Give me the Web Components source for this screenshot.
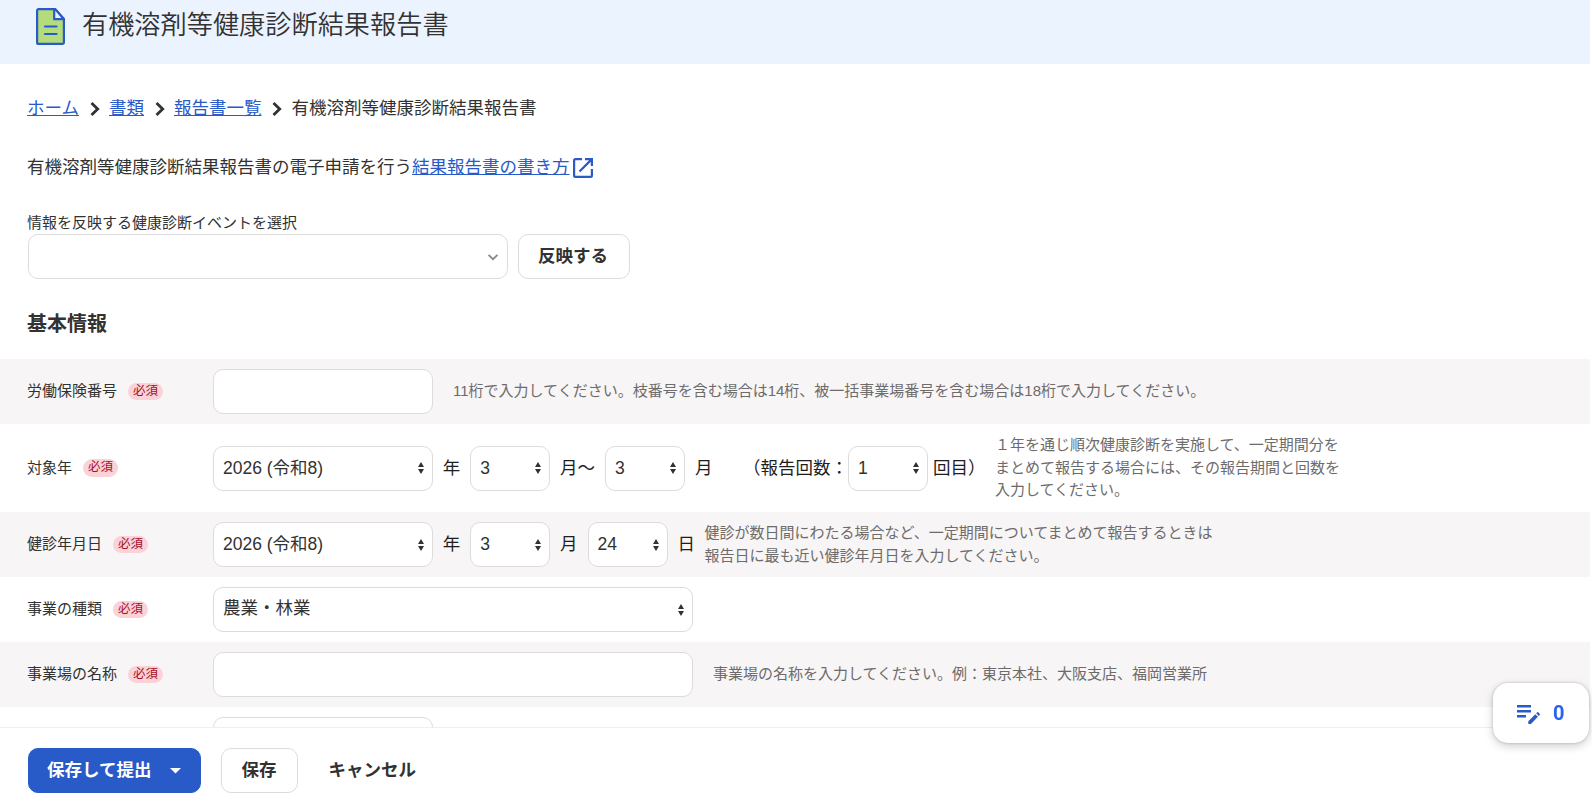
<!DOCTYPE html>
<html lang="ja">
<head>
<meta charset="UTF-8">
<title>有機溶剤等健康診断結果報告書</title>
<style>
    html, body {
        margin: 0;
        height: 100%;
        overflow: hidden;
        background: #fff;
    }
    body {
        font-family: "Liberation Sans", "Noto Sans CJK JP", sans-serif;
        font-size: 17.5px;
        line-height: 1.5;
        color: #323232;
    }
</style>
</head>
<body>
<report-page></report-page>

<script>
class PageHeader extends HTMLElement {
    constructor() {
        super();
        this.attachShadow({ mode: 'open' });
    }

    connectedCallback() {
        this.shadowRoot.innerHTML = `
            <style>
                :host {
                    display: flex;
                    align-items: flex-start;
                    height: 64px;
                    box-sizing: border-box;
                    padding: 8px 0 0 36px;
                    background: #ebf3ff;
                }
                svg {
                    display: block;
                    width: 29px;
                    height: 37px;
                    margin-right: 17px;
                }
                h1 {
                    margin: 0;
                    font-size: 26.2px;
                    line-height: 35px;
                    font-weight: 350;
                    white-space: nowrap;
                }
            </style>
            <svg viewBox="0 0 29 37" fill="none" stroke="#285ac8" stroke-width="2.200" stroke-linejoin="round">
                <path d="M2.500 1.100H19L27.900 11V34.400a1.500 1.500 0 0 1-1.500 1.500H2.600A1.500 1.500 0 0 1 1.100 34.400V2.600A1.500 1.500 0 0 1 2.500 1.100Z" fill="#b4dc7d"/>
                <path d="M18.200 1.100V11.200H27.900L19.200 1.100Z" fill="#ebf3ff"/>
                <path d="M9 18.500H20.500M9 26H20.500" stroke-linecap="round"/>
            </svg>
            <h1><slot></slot></h1>
        `;
    }
}

class BreadCrumb extends HTMLElement {
    constructor() {
        super();
        this.attachShadow({ mode: 'open' });
    }

    connectedCallback() {
        const items = this.getAttribute('items').split(',');
        const arrow = '<svg viewBox="0 0 10 16" width="10" height="16"><path d="M1.500 2 7.700 8 1.500 14" fill="none" stroke="#323232" stroke-width="2.800"/></svg>';
        this.shadowRoot.innerHTML = `
            <style>
                :host {
                    display: flex;
                    align-items: center;
                    height: 26px;
                    white-space: nowrap;
                }
                a {
                    color: #285ac8;
                    text-decoration: underline;
                }
                svg {
                    margin: 2px 9px 0 11px;
                }
            </style>
            ${items.map((item, i) => i < items.length - 1 ? `<a>${item}</a>${arrow}` : `<span>${item}</span>`).join('')}
        `;
    }
}

class VbButton extends HTMLElement {
    constructor() {
        super();
        this.attachShadow({ mode: 'open' });
    }

    connectedCallback() {
        this.shadowRoot.innerHTML = `
            <style>
                :host {
                    display: inline-flex;
                }
                button {
                    display: flex;
                    align-items: center;
                    height: 45px;
                    box-sizing: border-box;
                    padding: 0 21px 0 19px;
                    border: 1px solid #dcdcdc;
                    border-radius: 10px;
                    background: #fff;
                    color: #323232;
                    font: inherit;
                    font-weight: 700;
                    white-space: nowrap;
                }
                :host([primary]) button {
                    padding: 0 19px 0 18px;
                    background: #285ac8;
                    border-color: #285ac8;
                    color: #fff;
                }
                :host([text]) button {
                    border-color: transparent;
                    background: transparent;
                }
                svg {
                    display: none;
                    margin-left: 19px;
                }
                :host([primary]) svg {
                    display: block;
                }
            </style>
            <button type="button">
                <span><slot></slot></span>
                <svg width="11" height="6" viewBox="0 0 11 6"><path d="M0 0H11L5.500 5.500Z" fill="#fff"/></svg>
            </button>
        `;
    }
}

class RequiredBadge extends HTMLElement {
    constructor() {
        super();
        this.attachShadow({ mode: 'open' });
    }

    connectedCallback() {
        this.shadowRoot.innerHTML = `
            <style>
                :host {
                    display: inline-block;
                    height: 17.5px;
                    padding: 0 5px;
                    border-radius: 9px;
                    background: #fad2d7;
                    color: #a50f28;
                    font-size: 12.5px;
                    line-height: 16px;
                }
            </style>
            必須
        `;
    }
}

class TextBox extends HTMLElement {
    constructor() {
        super();
        this.attachShadow({ mode: 'open' });
    }

    connectedCallback() {
        this.shadowRoot.innerHTML = `
            <style>
                :host {
                    display: block;
                    flex: none;
                    width: ${this.getAttribute('width')}px;
                    height: 45px;
                }
                input {
                    display: block;
                    width: 100%;
                    height: 100%;
                    box-sizing: border-box;
                    border: 1px solid #dcdcdc;
                    border-radius: 10px;
                    background: #fff;
                    font: inherit;
                }
            </style>
            <input type="text">
        `;
    }
}

class SelectBox extends HTMLElement {
    constructor() {
        super();
        this.attachShadow({ mode: 'open' });
    }

    connectedCallback() {
        const icon = this.hasAttribute('combo')
            ? '<svg width="12" height="8" viewBox="0 0 12 8"><path d="M1.500 1.800 6 6.200 10.500 1.800" fill="none" stroke="#8c8989" stroke-width="1.800"/></svg>'
            : '<svg width="6" height="12" viewBox="0 0 6 12"><path d="M3 0 6 5H0ZM3 12 0 7H6Z" fill="#323232"/></svg>';
        this.shadowRoot.innerHTML = `
            <style>
                :host {
                    display: flex;
                    flex: none;
                    align-items: center;
                    justify-content: space-between;
                    box-sizing: border-box;
                    width: ${this.getAttribute('width')}px;
                    height: 45px;
                    padding: 0 8px 0 9px;
                    border: 1px solid #dcdcdc;
                    border-radius: 10px;
                    background: #fff;
                    color: #323232;
                    white-space: nowrap;
                }
                :host([wide]) span {
                    padding-bottom: 2px;
                }
            </style>
            <span><slot></slot></span>
            ${icon}
        `;
    }
}

class FormRow extends HTMLElement {
    constructor() {
        super();
        this.attachShadow({ mode: 'open' });
    }

    connectedCallback() {
        const label = this.getAttribute('label');
        this.shadowRoot.innerHTML = `
            <style>
                :host {
                    display: grid;
                    grid-template-columns: 186px 1fr;
                    align-items: center;
                    box-sizing: border-box;
                    min-height: 65px;
                    padding: 10px 28px 10px 27px;
                }
                :host([tall]) {
                    min-height: 88px;
                }
                :host(:nth-child(odd)) {
                    background: #f7f5f5;
                }
                .label {
                    display: flex;
                    align-items: center;
                    gap: 11px;
                    font-size: 15px;
                    line-height: 22.5px;
                    white-space: nowrap;
                }
                .field {
                    display: flex;
                    align-items: center;
                    white-space: nowrap;
                    color: #1e1e1e;
                }
            </style>
            <div class="label">${label ? `${label}<required-badge></required-badge>` : ''}</div>
            <div class="field"><slot></slot></div>
        `;
    }
}

class HintText extends HTMLElement {
    constructor() {
        super();
        this.attachShadow({ mode: 'open' });
    }

    connectedCallback() {
        this.shadowRoot.innerHTML = `
            <style>
                :host {
                    display: block;
                    margin-left: ${this.getAttribute('gap') || 20}px;
                    color: #6e6b6b;
                    font-size: 15px;
                    line-height: 22.5px;
                }
            </style>
            <slot></slot>
        `;
    }
}

class UnitText extends HTMLElement {
    constructor() {
        super();
        this.attachShadow({ mode: 'open' });
    }

    connectedCallback() {
        this.shadowRoot.innerHTML = `
            <style>
                :host {
                    display: block;
                    margin: 0 10px 0 9.8px;
                }
                :host([last]) { margin-right: 0; }
                :host([open]) { margin: 0 0 0 30.6px; }
                :host([close]) { margin: 0 0 0 5px; }
            </style>
            <slot></slot>
        `;
    }
}

class ActionBar extends HTMLElement {
    constructor() {
        super();
        this.attachShadow({ mode: 'open' });
    }

    connectedCallback() {
        this.shadowRoot.innerHTML = `
            <style>
                :host {
                    display: flex;
                    flex: none;
                    height: 79px;
                    box-sizing: border-box;
                    padding: 20px 28px;
                    border-top: 1px solid #ebeffa;
                    background: #fff;
                }
                .main { margin-right: 20px; }
                .sub { margin-right: 10px; }
            </style>
            <vb-button class="main" primary>保存して提出</vb-button>
            <vb-button class="sub">保存</vb-button>
            <vb-button text>キャンセル</vb-button>
        `;
    }
}

class MemoButton extends HTMLElement {
    constructor() {
        super();
        this.attachShadow({ mode: 'open' });
    }

    connectedCallback() {
        this.shadowRoot.innerHTML = `
            <style>
                :host {
                    position: fixed;
                    right: 3px;
                    bottom: 63px;
                    display: flex;
                    align-items: center;
                    gap: 13px;
                    width: 96px;
                    height: 60px;
                    box-sizing: border-box;
                    padding-left: 24px;
                    border-radius: 15px;
                    background: #fff;
                    box-shadow: 0 0 3px rgba(0, 0, 0, 0.2), 0 3px 10px rgba(0, 0, 0, 0.2);
                    color: #2864f0;
                    font: 700 20px/30px Roboto, sans-serif;
                }
                svg {
                    position: relative;
                    top: 2px;
                }
            </style>
            <svg width="23" height="20" viewBox="0 0 23 20" fill="#285ac8">
                <path d="M0 0H14V2.500H0ZM0 5H14V7.500H0ZM0 10H9V12.500H0Z"/>
                <path d="M11.300 16.200 18.300 9.200 20.900 11.800 13.900 19H11.300ZM19.200 8.300 20.200 7.300Q20.700 6.900 21.200 7.300L22.700 8.800Q23.100 9.400 22.700 9.900L21.800 10.900Z"/>
            </svg>
            <span>0</span>
        `;
    }
}

class ReportPage extends HTMLElement {
    constructor() {
        super();
        this.attachShadow({ mode: 'open' });
    }

    connectedCallback() {
        this.shadowRoot.innerHTML = `
            <style>
                :host {
                    display: flex;
                    flex-direction: column;
                    height: 100vh;
                    margin-right: 2px;
                }
                main {
                    flex: 1;
                    min-height: 0;
                    overflow: hidden;
                }
                .intro {
                    padding: 31px 27px 0;
                }
                .lead {
                    display: flex;
                    align-items: center;
                    height: 26px;
                    margin: 33px 0 0;
                    white-space: nowrap;
                }
                .lead a {
                    color: #285ac8;
                    text-decoration: underline;
                }
                .lead svg {
                    margin: 2px 0 0 3px;
                }
                label {
                    display: block;
                    margin-top: 31px;
                    font-size: 15px;
                    line-height: 23px;
                }
                .reflect {
                    display: flex;
                    gap: 10px;
                    padding-left: 1px;
                }
                h2 {
                    margin: 30px 0 20px;
                    font-size: 20px;
                    line-height: 30px;
                }
            </style>
            <page-header>有機溶剤等健康診断結果報告書</page-header>
            <main>
                <section class="intro">
                    <bread-crumb items="ホーム,書類,報告書一覧,有機溶剤等健康診断結果報告書"></bread-crumb>
                    <p class="lead">有機溶剤等健康診断結果報告書の電子申請を行う<a>結果報告書の書き方</a>
                        <svg width="20" height="20" viewBox="0 0 20 20" fill="none" stroke="#285ac8" stroke-width="2.200">
                            <path d="M9 1.100H2.500Q1.100 1.100 1.100 2.500V17.500Q1.100 18.900 2.500 18.900H17.500Q18.900 18.900 18.900 17.500V11"/>
                            <path d="M12 1.100H18.900V8M18.600 1.400 6.500 13.500"/>
                        </svg>
                    </p>
                    <label>情報を反映する健康診断イベントを選択</label>
                    <div class="reflect">
                        <select-box width="480" combo></select-box>
                        <vb-button>反映する</vb-button>
                    </div>
                    <h2>基本情報</h2>
                </section>
                <section class="rows">
                    <form-row label="労働保険番号">
                        <text-box width="220"></text-box>
                        <hint-text>11桁で入力してください。枝番号を含む場合は14桁、被一括事業場番号を含む場合は18桁で入力してください。</hint-text>
                    </form-row>
                    <form-row label="対象年" tall>
                        <select-box width="220">2026 (令和8)</select-box>
                        <unit-text>年</unit-text>
                        <select-box width="80">3</select-box>
                        <unit-text>月～</unit-text>
                        <select-box width="80">3</select-box>
                        <unit-text last>月</unit-text>
                        <unit-text open>（報告回数：</unit-text>
                        <select-box width="80">1</select-box>
                        <unit-text close>回目）</unit-text>
                        <hint-text gap="9.500">１年を通じ順次健康診断を実施して、一定期間分を<br>まとめて報告する場合には、その報告期間と回数を<br>入力してください。</hint-text>
                    </form-row>
                    <form-row label="健診年月日">
                        <select-box width="220">2026 (令和8)</select-box>
                        <unit-text>年</unit-text>
                        <select-box width="80">3</select-box>
                        <unit-text>月</unit-text>
                        <select-box width="80">24</select-box>
                        <unit-text last>日</unit-text>
                        <hint-text gap="9.500">健診が数日間にわたる場合など、一定期間についてまとめて報告するときは<br>報告日に最も近い健診年月日を入力してください。</hint-text>
                    </form-row>
                    <form-row label="事業の種類">
                        <select-box width="480" wide>農業・林業</select-box>
                    </form-row>
                    <form-row label="事業場の名称">
                        <text-box width="480"></text-box>
                        <hint-text>事業場の名称を入力してください。例：東京本社、大阪支店、福岡営業所</hint-text>
                    </form-row>
                    <form-row>
                        <text-box width="220"></text-box>
                    </form-row>
                </section>
            </main>
            <action-bar></action-bar>
            <memo-button></memo-button>
        `;
    }
}

customElements.define('page-header', PageHeader);
customElements.define('bread-crumb', BreadCrumb);
customElements.define('vb-button', VbButton);
customElements.define('required-badge', RequiredBadge);
customElements.define('text-box', TextBox);
customElements.define('select-box', SelectBox);
customElements.define('form-row', FormRow);
customElements.define('hint-text', HintText);
customElements.define('unit-text', UnitText);
customElements.define('action-bar', ActionBar);
customElements.define('memo-button', MemoButton);
customElements.define('report-page', ReportPage);
</script>
</body>
</html>
